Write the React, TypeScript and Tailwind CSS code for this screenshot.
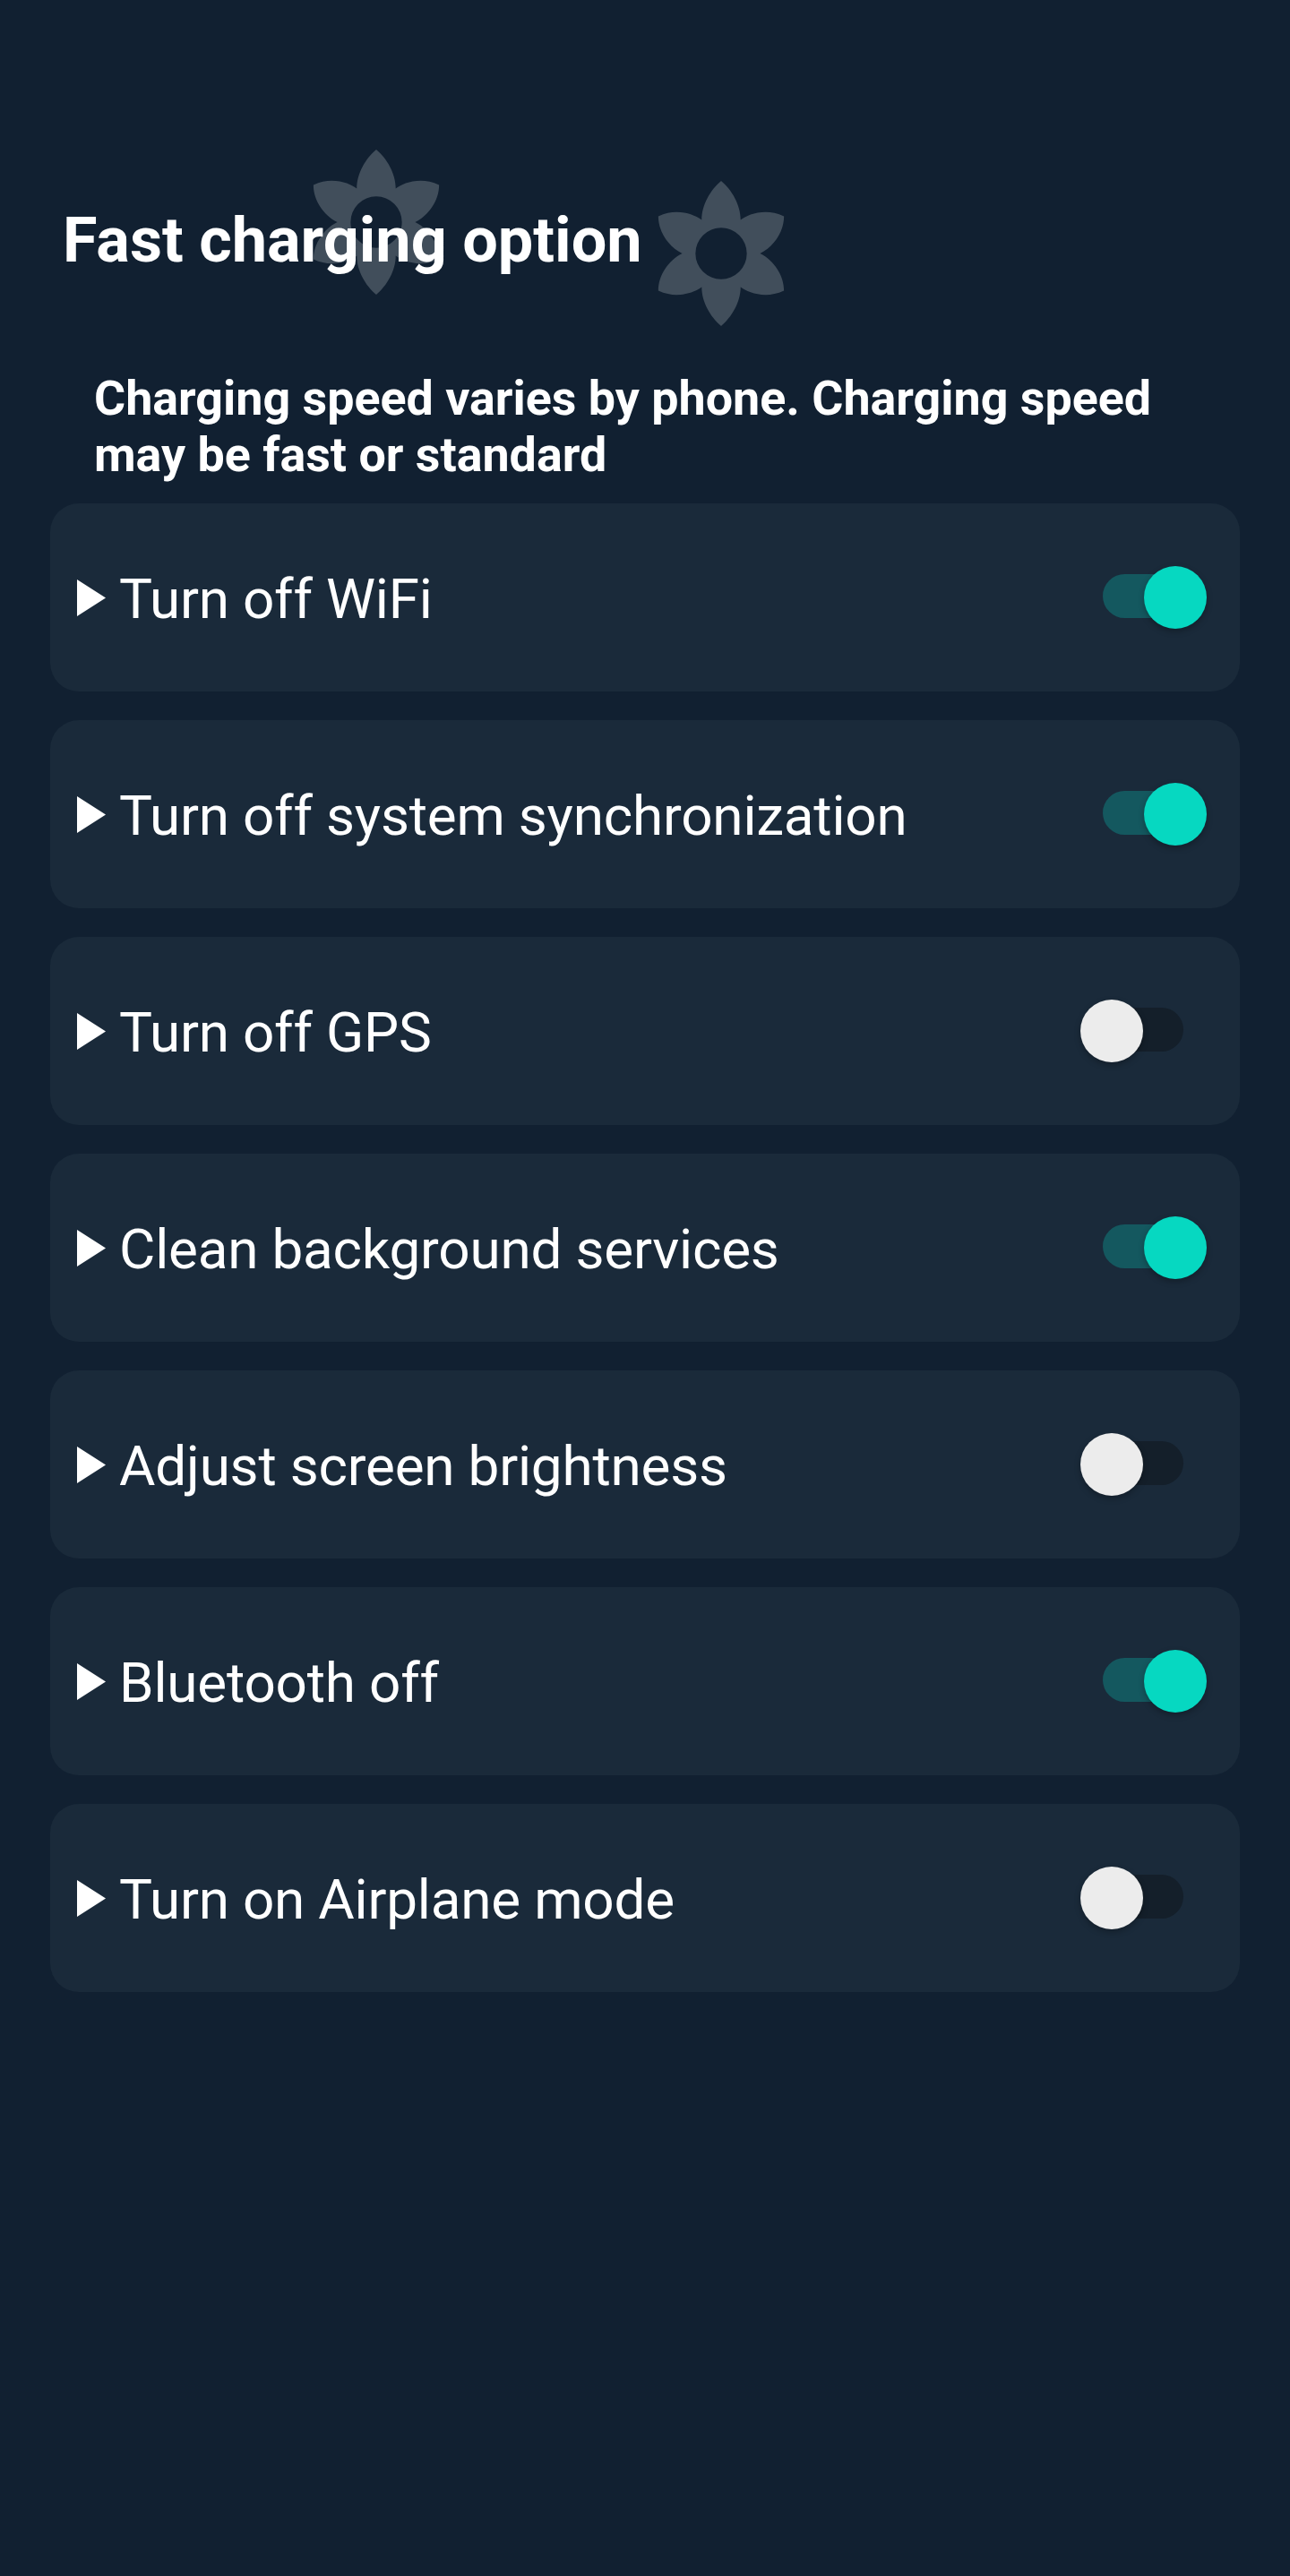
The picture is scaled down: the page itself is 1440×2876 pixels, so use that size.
const items: [string, boolean][] = [
  ["Turn off WiFi", true],
  ["Turn off system synchronization", true],
  ["Turn off GPS", false],
  ["Clean background services", true],
  ["Adjust screen brightness", false],
  ["Bluetooth off", true],
  ["Turn on Airplane mode", false],
];

function Flower({ className }: { className: string }) {
  return (
    <svg viewBox="-72 -83 144 166" className={className} aria-hidden="true">
      <path
        fill="#414e5b"
        fillRule="evenodd"
        d="M0 -82 C12 -72 22 -55 22 -38 C30 -44 50 -52 71 -42 C71 -25 60 -8 44 0 C60 8 71 25 71 42 C50 52 30 44 22 38 C22 55 12 72 0 82 C-12 72 -22 55 -22 38 C-30 44 -50 52 -71 42 C-71 25 -60 8 -44 0 C-60 -8 -71 -25 -71 -42 C-50 -52 -30 -44 -22 -38 C-22 -55 -12 -72 0 -82 Z M29 0 A29 29 0 1 0 -29 0 A29 29 0 1 0 29 0 Z"
      />
    </svg>
  );
}

function Toggle({ on }: { on: boolean }) {
  return (
    <div className="relative mb-[3px] h-[49px] w-[90px] shrink-0">
      <div className={`h-full w-full rounded-full ${on ? "bg-[#14585f]" : "bg-[#141f2a]"}`} />
      <div
        className={`absolute top-[-9px] h-[70px] w-[70px] rounded-full shadow-[0_3px_7px_rgba(0,0,0,0.28)] ${
          on ? "left-[46px] bg-[#06d8c1]" : "left-[-25px] bg-[#ececec]"
        }`}
      />
    </div>
  );
}

export default function App() {
  return (
    <div className="relative h-[2876px] w-full overflow-hidden bg-[#112031] font-['Roboto',sans-serif] text-white">
      <Flower className="absolute left-[347.5px] top-[166px] h-[164px] w-[144px]" />
      <Flower className="absolute left-[732.5px] top-[201px] h-[164px] w-[144px]" />
      <div className="relative px-[56px] pt-[228px]">
        <h1 className="ml-[14px] text-[70.2px] font-bold leading-[80px]">Fast charging option</h1>
        <p className="ml-[49px] mt-[105px] w-[1230px] text-[53.8px] font-bold leading-[63px]">
          Charging speed varies by phone. Charging speed may be fast or standard
        </p>
        <div className="mt-[23px] flex flex-col gap-[32px]">
          {items.map(([label, on]) => (
            <div
              key={label}
              className="flex h-[210px] items-center justify-between rounded-[32px] bg-[#1a2a3a] pl-[30px] pr-[63px]"
            >
              <div className="flex items-center">
                <svg viewBox="0 0 32 41" className="h-[41px] w-[32px] shrink-0" aria-hidden="true">
                  <polygon points="0,0 32,20.5 0,41" fill="#ffffff" />
                </svg>
                <span className="ml-[15px] pt-[4px] text-[62px] leading-[80px] tracking-[-0.2px]">{label}</span>
              </div>
              <Toggle on={on} />
            </div>
          ))}
        </div>
      </div>
    </div>
  );
}
